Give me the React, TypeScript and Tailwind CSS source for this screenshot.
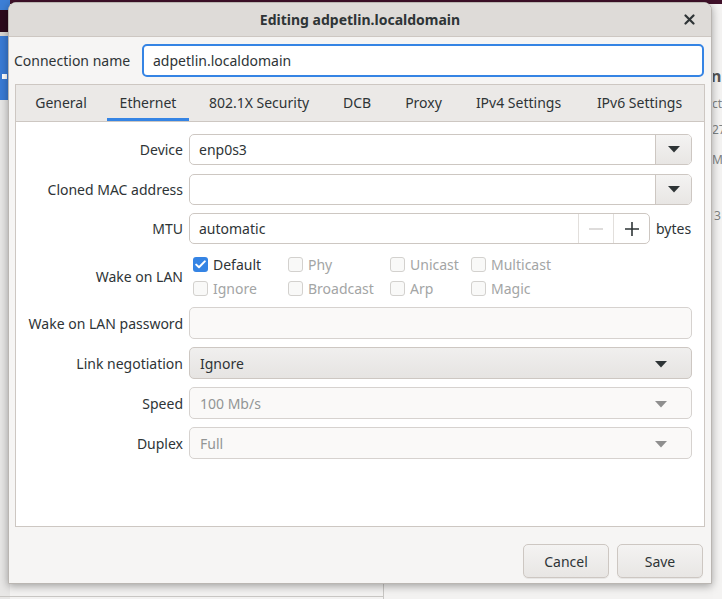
import React from 'react'

const font = { fontFamily: '"Noto Sans", "Open Sans", sans-serif' }

const tabs: { name: string; w: string }[] = [
  { name: 'General', w: 'w-[76px]' },
  { name: 'Ethernet', w: 'w-[82px]' },
  { name: '802.1X Security', w: 'w-[124px]' },
  { name: 'DCB', w: 'w-[56px]' },
  { name: 'Proxy', w: 'w-[61px]' },
  { name: 'IPv4 Settings', w: 'w-[113px]' },
  { name: 'IPv6 Settings', w: 'w-[113px]' },
]

const Arrow = ({ muted }: { muted?: boolean }) => (
  <svg width="12" height="7" viewBox="0 0 12 7">
    <path d="M0 0 L12 0 L6 6.5 Z" fill={muted ? '#8f8f8f' : '#2e3436'} />
  </svg>
)

const Check = ({ checked, label }: { checked?: boolean; label: string }) => (
  <div className="flex items-center gap-[5px] h-[24px]">
    {checked ? (
      <span className="w-[15px] h-[15px] rounded-[3px] bg-[#3584e4] flex items-center justify-center">
        <svg width="11" height="9" viewBox="0 0 11 9">
          <path d="M1.2 4.6 L4 7.3 L9.8 1.4" stroke="white" strokeWidth="2" fill="none" strokeLinecap="round" strokeLinejoin="round" />
        </svg>
      </span>
    ) : (
      <span className="w-[15px] h-[15px] rounded-[3px] border border-[#d3d1ce] bg-[#f9f9f8]" />
    )}
    <span className={checked ? 'text-[#2e3436]' : 'text-[#a3a5a5]'}>{label}</span>
  </div>
)

const Row = ({ label, children, h = 'h-[31px]' }: { label: string; children: React.ReactNode; h?: string }) => (
  <div className={`flex items-center ${h}`}>
    <div className="w-[173px] pr-[6px] text-right text-[#2e3436]">{label}</div>
    <div className="flex-1 h-full flex items-center">{children}</div>
  </div>
)

const ComboEntry = ({ value }: { value: string }) => (
  <div className="flex w-full h-full border border-[#cdc7c2] rounded-[5px] bg-white overflow-hidden">
    <div className="flex-1 px-[9px] flex items-center text-[#2e3436]">{value}</div>
    <div className="w-[36px] border-l border-[#cdc7c2] bg-gradient-to-b from-[#f4f3f2] to-[#e8e6e4] flex items-center justify-center">
      <Arrow />
    </div>
  </div>
)

const Combo = ({ value, disabled }: { value: string; disabled?: boolean }) => (
  <div
    className={`flex w-full h-full items-center border rounded-[5px] px-[10px] ${
      disabled
        ? 'border-[#d6d2cf] bg-[#faf9f8] text-[#929595]'
        : 'border-[#cdc7c2] bg-gradient-to-b from-[#f0efee] to-[#e6e4e2] text-[#2e3436]'
    }`}
  >
    <span className="flex-1">{value}</span>
    <span className="pr-[14px] pt-[2px]">
      <Arrow muted={disabled} />
    </span>
  </div>
)

export default function App() {
  return (
    <div className="relative w-[722px] h-[599px] overflow-hidden bg-[#f3f2f1] text-[14px]" style={font}>
      {/* desktop behind */}
      <div className="absolute left-0 top-0 w-full h-[4px] bg-[#40112a]" />
      <div className="absolute left-0 top-0 w-[10px] h-[10px] bg-[#3d7fd6]" />
      <div className="absolute left-0 top-[10px] w-[10px] h-[22px] bg-[#2c0a1c]" />
      <div className="absolute left-0 top-[32px] w-[10px] h-[4px] bg-[#d8d6d3]" />
      <div className="absolute left-0 top-[36px] w-[10px] h-[64px] bg-[#3a7bd5]">
        <div className="absolute left-[2px] top-[38px] w-[5px] h-[5px] bg-white" />
      </div>
      <div className="absolute left-0 top-[100px] w-[10px] h-[499px] bg-[#e8e7e6]" />
      <div className="absolute left-[713px] top-[4px] w-[9px] h-[595px] overflow-hidden bg-[#f4f3f2] text-[#7f8383] text-[12px] leading-none">
        <div className="absolute left-[-2px] top-[64px] text-[16px] font-bold text-[#555]">n</div>
        <div className="absolute left-[-1px] top-[94px]">cte</div>
        <div className="absolute left-[-1px] top-[120px]">27</div>
        <div className="absolute left-[-1px] top-[150px]">Mb</div>
        <div className="absolute left-[1px] top-[206px]">3</div>
      </div>
      <div className="absolute left-0 top-[596px] w-[384px] h-[1px] bg-[#c8c6c3]" />
      <div className="absolute left-[383px] top-[584px] w-[1px] h-[15px] bg-[#c8c6c3]" />

      {/* dialog */}
      <div className="absolute left-[8px] top-[2px] w-[704px] h-[582px] flex flex-col rounded-t-[8px] bg-[#f6f5f4] border border-[#bab6b2] shadow-[0_2px_8px_rgba(0,0,0,0.35)] overflow-hidden">
        <div className="h-[34px] shrink-0 bg-[#dedbd8] border-b border-[#cdc7c2] flex items-center justify-center relative">
          <span className="font-bold text-[#2e3436] text-[14px]">Editing adpetlin.localdomain</span>
          <svg className="absolute right-[16px] top-[11px]" width="11" height="11" viewBox="0 0 11 11">
            <path d="M1.5 1.5 L9.5 9.5 M9.5 1.5 L1.5 9.5" stroke="#2e3436" strokeWidth="2.2" strokeLinecap="round" />
          </svg>
        </div>

        <div className="flex items-center h-[33px] mt-[7px] pl-[5px] pr-[7px]">
          <span className="w-[128px] text-[#2e3436]">Connection name</span>
          <div className="flex-1 h-full flex items-center px-[9px] bg-white border-2 border-[#3584e4] rounded-[5px] text-[#2e3436]">
            adpetlin.localdomain
          </div>
        </div>

        <div className="mx-[6px] mt-[7px] h-[443px] border border-[#cdc7c2] flex flex-col">
          <div className="h-[37px] shrink-0 bg-[#ebe9e7] border-b border-[#cdc7c2] flex px-[7px] gap-[8px]">
            {tabs.map((t) => (
              <div
                key={t.name}
                className={`${t.w} flex items-center justify-center whitespace-nowrap pt-[1px] border-b-[3px] ${
                  t.name === 'Ethernet' ? 'border-[#3584e4]' : 'border-transparent'
                } text-[#2e3436]`}
              >
                {t.name}
              </div>
            ))}
          </div>

          <div className="flex-1 bg-white pt-[12px] pr-[12px] flex flex-col">
            <Row label="Device">
              <ComboEntry value="enp0s3" />
            </Row>
            <div className="mt-[9px]">
              <Row label="Cloned MAC address">
                <ComboEntry value="" />
              </Row>
            </div>
            <div className="mt-[8px]">
              <Row label="MTU">
                <div className="flex w-[461px] h-full border border-[#cdc7c2] rounded-[5px] bg-white overflow-hidden">
                  <div className="flex-1 px-[9px] flex items-center text-[#2e3436]">automatic</div>
                  <div className="w-[35px] border-l border-[#e2dfdc] flex items-center justify-center">
                    <svg width="14" height="2" viewBox="0 0 14 2">
                      <path d="M0 1 H14" stroke="#d3d1cf" strokeWidth="1.5" />
                    </svg>
                  </div>
                  <div className="w-[36px] border-l border-[#e2dfdc] flex items-center justify-center">
                    <svg width="14" height="14" viewBox="0 0 14 14">
                      <path d="M0 7 H14 M7 0 V14" stroke="#2e3436" strokeWidth="1.6" />
                    </svg>
                  </div>
                </div>
                <span className="ml-[6px] text-[#2e3436]">bytes</span>
              </Row>
            </div>
            <div className="mt-[8px]">
              <Row label="Wake on LAN" h="h-[48px]">
                <div className="grid grid-cols-[95px_102px_81px_100px] pl-[4px]">
                  <Check checked label="Default" />
                  <Check label="Phy" />
                  <Check label="Unicast" />
                  <Check label="Multicast" />
                  <Check label="Ignore" />
                  <Check label="Broadcast" />
                  <Check label="Arp" />
                  <Check label="Magic" />
                </div>
              </Row>
            </div>
            <div className="mt-[7px]">
              <Row label="Wake on LAN password" h="h-[32px]">
                <div className="w-full h-full border border-[#d6d2cf] rounded-[5px] bg-[#faf9f8]" />
              </Row>
            </div>
            <div className="mt-[8px]">
              <Row label="Link negotiation" h="h-[32px]">
                <Combo value="Ignore" />
              </Row>
            </div>
            <div className="mt-[8px]">
              <Row label="Speed" h="h-[32px]">
                <Combo value="100 Mb/s" disabled />
              </Row>
            </div>
            <div className="mt-[8px]">
              <Row label="Duplex" h="h-[32px]">
                <Combo value="Full" disabled />
              </Row>
            </div>
          </div>
        </div>

        <div className="flex justify-end gap-[8px] pr-[8px] mt-[17px]">
          {['Cancel', 'Save'].map((b) => (
            <div
              key={b}
              className="w-[86px] h-[34px] flex items-center justify-center rounded-[5px] border border-[#cdc7c2] bg-gradient-to-b from-[#f4f3f2] to-[#e8e6e4] text-[#2e3436] shadow-[0_1px_0_rgba(0,0,0,0.06)]"
            >
              {b}
            </div>
          ))}
        </div>
      </div>
    </div>
  )
}
